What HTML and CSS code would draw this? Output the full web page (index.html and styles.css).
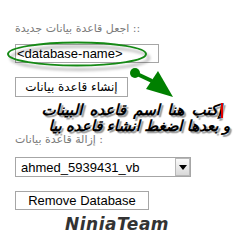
FILE: index.html
```html
<!DOCTYPE html>
<html>
<head>
<meta charset="utf-8">
<title>قواعد البيانات</title>
<link rel="stylesheet" href="styles.css">
</head>
<body>
	<div class="page">
		<div class="lbl">:: اجعل قاعدة بيانات جديدة</div>
		<input class="dbname" type="text" value="&lt;database-name&gt;">
		<button class="btn btn-create">إنشاء قاعدة بيانات</button>

		<div class="lbl lbl-remove">: إزالة قاعدة بيانات</div>
		<div class="select">
			<select>
				<option>ahmed_5939431_vb</option>
			</select>
			<span class="select-arrow"></span>
		</div>
		<button class="btn btn-remove">Remove Database</button>

		<div class="team">NiniaTeam</div>
	</div>

	<!-- ملاحظة فوق الصورة -->
	<svg class="marks" width="240" height="242" viewBox="0 0 240 242">
		<defs>
			<filter id="shade" x="-20%" y="-50%" width="140%" height="200%">
				<feDropShadow dx="3" dy="4" stdDeviation="1.6" flood-color="#000" flood-opacity="0.35"/>
			</filter>
		</defs>
		<ellipse cx="77" cy="54" rx="69" ry="11.5" fill="none" stroke="#188a18" stroke-width="2" filter="url(#shade)"/>
		<circle cx="135" cy="73" r="5" fill="#008000"/>
		<line x1="135" y1="73" x2="152" y2="81" stroke="#008000" stroke-width="4"/>
		<polygon points="158,71 146,89 173,97" fill="#008000"/>
	</svg>

	<div class="note">
		<div class="note-line note-first">إكتب هنا اسم قاعده البينات<span class="caret"></span></div>
		<div class="note-line note-second">و بعدها اضغط انشاء قاعده بيا</div>
	</div>
</body>
</html>
```

FILE: styles.css
```css
body{
	margin:0;
	padding:0;
	background:#ffffff;
	font-family:"Liberation Sans", Arial, sans-serif;
	font-size:13px;
}

.page{
	padding:22px 0 0 15px;
}

.lbl{
	height:14px;
	line-height:14px;
	font-family:"DejaVu Sans", sans-serif;
	font-size:11px;
	color:#7a7a7a;
	direction:rtl;
	text-align:left;
	width:max-content;
}

.lbl-remove{
	margin-top:36px;
}

.dbname{
	display:block;
	box-sizing:border-box;
	width:144px;
	height:19px;
	margin:8px 0 0 0;
	padding:0 1px;
	border:1px solid #a6a6a6;
	font-family:"Liberation Sans", Arial, sans-serif;
	font-size:13px;
	color:#000000;
	outline:none;
}

.btn{
	display:block;
	box-sizing:border-box;
	margin:14px 0 0 0;
	padding:0;
	border:1px solid #a6a6a6;
	background:#ffffff;
	color:#000000;
	font-size:13px;
}

.btn-create{
	width:113px;
	height:20px;
	font-family:"DejaVu Sans", sans-serif;
	font-size:12px;
}

.btn-remove{
	width:134px;
	height:19px;
	font-family:"Liberation Sans", Arial, sans-serif;
	line-height:17px;
}

.select{
	display:flex;
	box-sizing:border-box;
	width:176px;
	height:20px;
	margin-top:10px;
	border:1px solid #a6a6a6;
	background:#ffffff;
}

.select select{
	flex:1;
	appearance:none;
	-webkit-appearance:none;
	border:none;
	background:transparent;
	margin:0;
	padding:0 0 0 5px;
	font-family:"Liberation Sans", Arial, sans-serif;
	font-size:13px;
	color:#000000;
	outline:none;
}

.select-arrow{
	width:15px;
	box-sizing:border-box;
	border:1px solid #b8b8b8;
	background:linear-gradient(#fafafa, #d9d9d9);
	display:flex;
	align-items:center;
	justify-content:center;
}

.select-arrow:after{
	content:"";
	border-left:4px solid transparent;
	border-right:4px solid transparent;
	border-top:5px solid #000000;
}

.team{
	margin-top:4px;
	padding-left:50px;
	height:20px;
	line-height:20px;
	font-family:"DejaVu Sans", sans-serif;
	font-size:17px;
	font-weight:bold;
	font-style:italic;
	color:#333333;
	letter-spacing:0.5px;
}

.marks{
	position:absolute;
	left:0;
	top:0;
	pointer-events:none;
}

.note{
	position:absolute;
	right:10px;
	top:101px;
	width:225px;
	direction:rtl;
	text-align:right;
	font-family:"DejaVu Sans", sans-serif;
	font-weight:bold;
	font-style:italic;
	color:#000000;
	text-shadow:2px 2px 1px #9a9a9a;
	white-space:nowrap;
}

.note-first{
	position:relative;
	padding-right:8px;
	font-size:15px;
	line-height:18px;
	word-spacing:2px;
}

.note-second{
	font-size:15px;
	line-height:15px;
	word-spacing:-1px;
}

.caret{
	position:absolute;
	right:7px;
	top:2px;
	width:2px;
	height:15px;
	background:#e00000;
}
```
